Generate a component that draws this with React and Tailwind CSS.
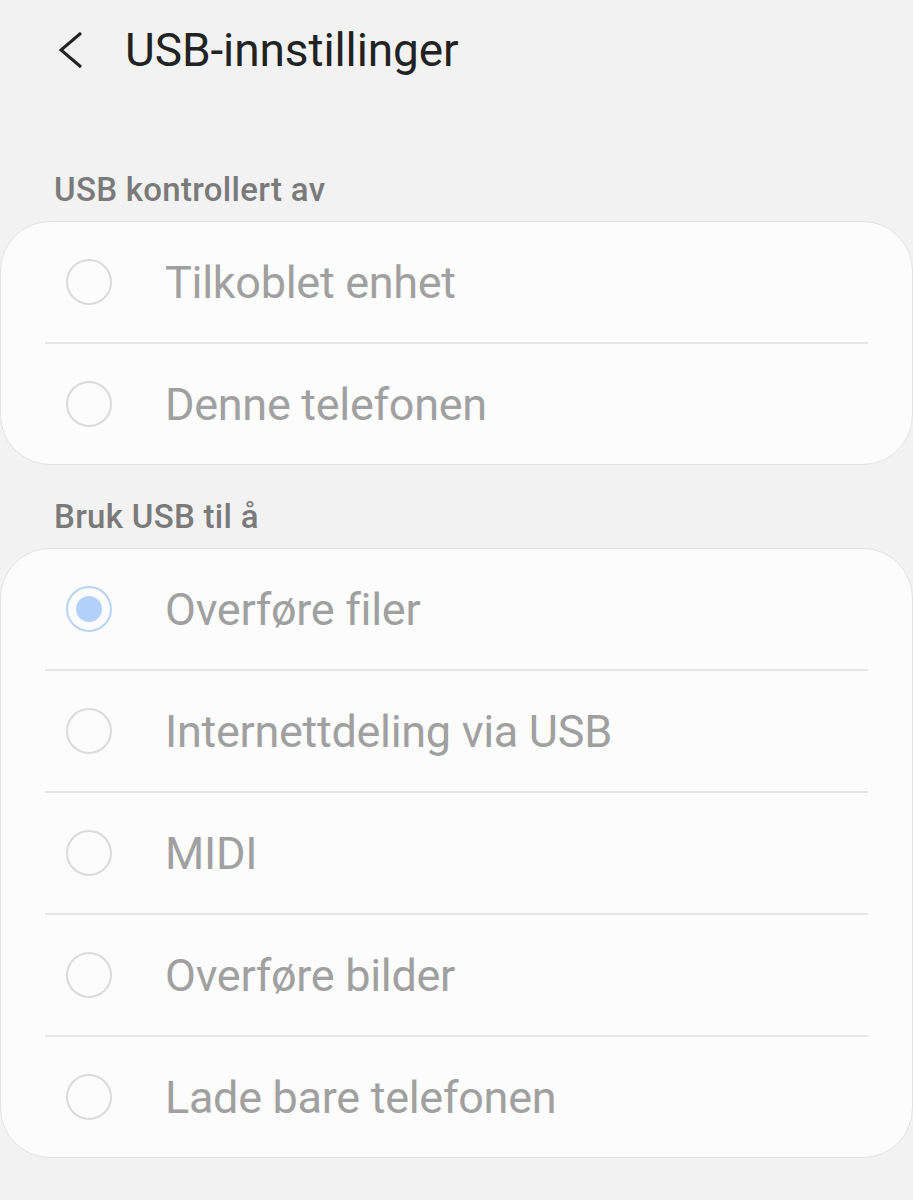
import React from 'react';

const font = { fontFamily: 'Roboto, "Noto Sans", sans-serif' };

const Radio = ({ checked }) =>
  checked ? (
    <div className="flex h-[46px] w-[46px] shrink-0 items-center justify-center rounded-full border-2 border-[#b9d3f2]">
      <div className="h-[26px] w-[26px] rounded-full bg-[#b2d1fb]" />
    </div>
  ) : (
    <div className="h-[46px] w-[46px] shrink-0 rounded-full border-2 border-[#dadada]" />
  );

const Row = ({ label, checked, last }) => (
  <div>
    <div className="flex h-[120px] items-center">
      <div className="ml-[65px] mr-[53px]">
        <Radio checked={checked} />
      </div>
      <span className="text-[45px] leading-none tracking-[-0.3px] text-[#a0a0a0]">{label}</span>
    </div>
    {!last && <div className="mx-[44px] h-[2px] bg-[#e6e6e6]" />}
  </div>
);

const Section = ({ title, items, selected }) => (
  <div>
    <div className="h-[40px] pl-[54px] text-[33px] font-medium leading-[40px] tracking-[0.3px] text-[#7a7a7a]">
      {title}
    </div>
    <div className="mt-[11px] rounded-[50px] border border-[#e2e2e2] bg-[#fcfcfc]">
      {items.map((item, idx) => (
        <Row key={item} label={item} checked={item === selected} last={idx === items.length - 1} />
      ))}
    </div>
  </div>
);

export default function App() {
  return (
    <div className="min-h-[1200px] w-full bg-[#f2f2f2]" style={font}>
      <div className="flex h-[100px] items-center">
        <svg className="ml-[58px] h-[40px] w-[26px]" viewBox="0 0 26 40" fill="none">
          <polyline points="23,3 3,20 23,37" stroke="#222" strokeWidth="3" strokeLinejoin="miter" />
        </svg>
        <h1 className="ml-[41px] text-[46px] leading-none tracking-[-0.1px] text-[#222]">USB-innstillinger</h1>
      </div>
      <div className="mt-[70px]">
        <Section title="USB kontrollert av" items={['Tilkoblet enhet', 'Denne telefonen']} />
      </div>
      <div className="mt-[32px]">
        <Section
          title="Bruk USB til å"
          selected="Overføre filer"
          items={['Overføre filer', 'Internettdeling via USB', 'MIDI', 'Overføre bilder', 'Lade bare telefonen']}
        />
      </div>
    </div>
  );
}
